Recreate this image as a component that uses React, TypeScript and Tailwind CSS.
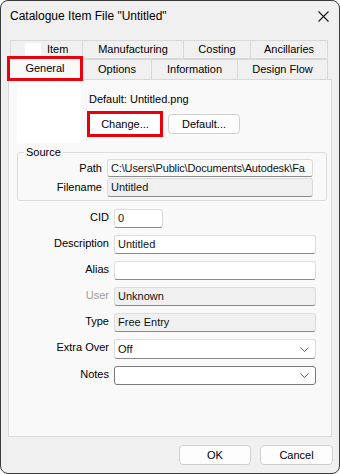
import React from 'react';

const Chevron = () => (
  <svg width="9" height="5" viewBox="0 0 9 5" className="shrink-0">
    <path d="M0.5 0.5 L4.5 4.5 L8.5 0.5" fill="none" stroke="#606060" strokeWidth="1" />
  </svg>
);

const Field: React.FC<{ value?: string; bg?: string; width?: string; height?: string; combo?: boolean; dark?: boolean; tight?: boolean }> = ({
  value = '',
  bg = 'bg-white',
  width = 'w-[202px]',
  height = 'h-[19px]',
  combo = false,
  dark = false,
  tight = false,
}) => (
  <div
    className={`${width} ${height} ${bg} flex items-center justify-between rounded-[3px] border pl-[3px] ${tight ? 'pr-0' : 'pr-[6px]'} overflow-hidden whitespace-nowrap text-[#111] ${
      dark ? 'border-[#7a7a7a]' : 'border-[#dcdcdc] border-b-[#8a8a8a]'
    }`}
  >
    <span className={tight ? 'tracking-[-0.15px]' : ''}>{value}</span>
    {combo && <Chevron />}
  </div>
);

const Row: React.FC<{ label: string; muted?: boolean; children: React.ReactNode }> = ({ label, muted, children }) => (
  <div className="flex items-start">
    <div className={`w-[100px] text-right leading-[13px] pt-[2px] ${muted ? 'text-[#a0a0a0]' : 'text-black'}`}>{label}</div>
    <div className="ml-[5px]">{children}</div>
  </div>
);

const topTabs = [
  { label: 'Manufacturing', w: 'w-[101px]' },
  { label: 'Costing', w: 'w-[67px]' },
  { label: 'Ancillaries', w: 'w-[77px]' },
];

const bottomTabs = [
  { label: 'Options', w: 'w-[69px]' },
  { label: 'Information', w: 'w-[86px]' },
  { label: 'Design Flow', w: 'w-[90px]' },
];

const Button: React.FC<{ label: string; width: string }> = ({ label, width }) => (
  <div className={`${width} h-[20px] flex items-center justify-center rounded-[4px] border border-[#d0d0d0] bg-[#fdfdfd] text-black`}>
    {label}
  </div>
);

export default function App() {
  return (
    <div className="w-[340px] h-[474px] bg-white font-['Liberation_Sans',Arial,sans-serif] text-[11px]">
      <div className="h-full flex flex-col bg-[#f0f0f0] border border-[#3a3a3a] rounded-[8px] overflow-hidden">
        {/* title bar */}
        <div className="h-[30px] shrink-0 flex items-center justify-between pl-[9px] pr-[10px]">
          <span className="text-[12px] text-black">Catalogue Item File "Untitled"</span>
          <svg width="11" height="11" viewBox="0 0 11 11">
            <path d="M0.5 0.5 L10.5 10.5 M10.5 0.5 L0.5 10.5" stroke="#1a1a1a" strokeWidth="1.1" />
          </svg>
        </div>

        <div className="flex flex-col px-[7px]">
          {/* tab rows */}
          <div className="mt-[9px] flex h-[19px] pl-[2px]">
            <div className="w-[73px] h-full flex items-center pl-[14px] border border-[#d9d9d9] bg-[#f0f0f0]">
              <div className="w-[16px] h-[14px] bg-white" />
              <span className="ml-[6px]">Item</span>
            </div>
            {topTabs.map((t) => (
              <div key={t.label} className={`${t.w} h-full flex items-center justify-center border border-l-0 border-[#d9d9d9] bg-[#f0f0f0]`}>
                {t.label}
              </div>
            ))}
          </div>
          <div className="flex h-[20px]">
            <div className="relative z-10 -ml-[1px] -mt-[3px] w-[76px] h-[25px] border-[3px] border-[#e8000c] bg-[#f9f9f9] flex items-center justify-center">
              General
            </div>
            {bottomTabs.map((t) => (
              <div key={t.label} className={`${t.w} h-full flex items-center justify-center border border-l-0 border-b-0 border-[#d9d9d9] bg-[#f0f0f0]`}>
                {t.label}
              </div>
            ))}
          </div>

          {/* tab page */}
          <div className="h-[358px] border border-[#d9d9d9] bg-[#f9f9f9] flex flex-col">
            <div className="flex">
              <div className="ml-[8px] w-[64px] h-[63px] bg-white" />
              <div className="ml-[6px] flex flex-col">
                <div className="mt-[13px] pl-[2px] leading-[13px]">Default: Untitled.png</div>
                <div className="mt-[5px] flex items-center">
                  <div className="w-[76px] h-[26px] border-[3px] border-[#e8000c] bg-white flex items-center justify-center">
                    Change...
                  </div>
                  <div className="ml-[5px]">
                    <Button label="Default..." width="w-[72px]" />
                  </div>
                </div>
              </div>
            </div>

            <fieldset className="ml-[8px] mt-[3px] w-[310px] border border-[#dcdcdc] rounded-[3px] pb-[3px]">
              <legend className="ml-[6px] px-[2px] leading-[13px]">Source</legend>
              <div className="flex flex-col gap-[1px]">
                <div className="flex items-center">
                  <div className="w-[84px] text-right">Path</div>
                  <div className="ml-[5px]">
                    <Field value="C:\Users\Public\Documents\Autodesk\Fa" bg="bg-[#fbfbfb]" width="w-[206px]" height="h-[18px]" tight />
                  </div>
                </div>
                <div className="flex items-center">
                  <div className="w-[84px] text-right">Filename</div>
                  <div className="ml-[5px]">
                    <Field value="Untitled" bg="bg-[#f0f0f0]" width="w-[206px]" />
                  </div>
                </div>
              </div>
            </fieldset>

            <div className="mt-[8px] flex flex-col gap-[7px]">
              <Row label="CID">
                <Field value="0" width="w-[49px]" />
              </Row>
              <Row label="Description">
                <Field value="Untitled" />
              </Row>
              <Row label="Alias">
                <Field />
              </Row>
              <Row label="User" muted>
                <Field value="Unknown" bg="bg-[#f0f0f0]" />
              </Row>
              <Row label="Type">
                <Field value="Free Entry" bg="bg-[#f0f0f0]" />
              </Row>
              <Row label="Extra Over">
                <Field value="Off" combo height="h-[20px]" />
              </Row>
              <Row label="Notes">
                <Field combo dark />
              </Row>
            </div>
          </div>

          {/* footer buttons */}
          <div className="mt-[8px] flex justify-end gap-[9px] -mr-[1px]">
            <Button label="OK" width="w-[72px]" />
            <Button label="Cancel" width="w-[73px]" />
          </div>
        </div>
      </div>
    </div>
  );
}
